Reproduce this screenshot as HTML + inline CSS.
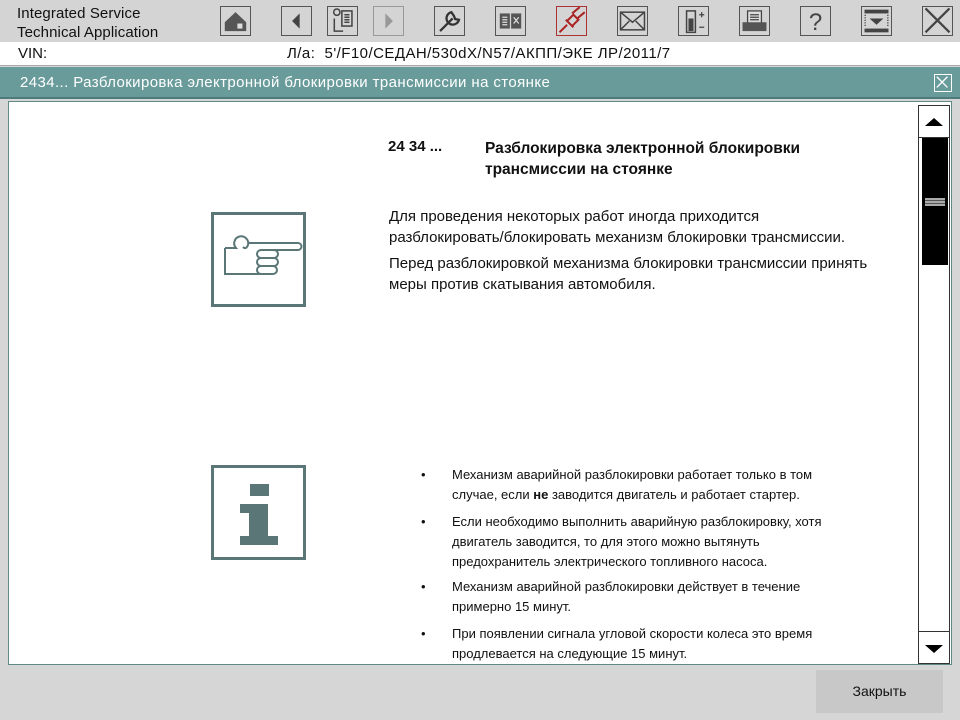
<!DOCTYPE html>
<html><head><meta charset="utf-8"><style>
*{margin:0;padding:0;box-sizing:border-box}
body{width:960px;height:720px;background:#d6d6d6;font-family:"Liberation Sans",sans-serif;position:relative;overflow:hidden;color:#111}
.a{position:absolute}
.btn{position:absolute;top:6px;width:31px;height:30px;border:1px solid #555;background:#d4d4d4}
.btn svg{width:29px;height:28px;display:block}
.t{font-size:13px;line-height:20px}
.u{font-size:15px;line-height:21px}
</style></head><body>
<div class="a" style="left:0;top:0;width:960px;height:42px;background:#d4d4d4"></div>
<div class="a" style="left:17px;top:4px;font-size:15px;line-height:19px;letter-spacing:0.1px">Integrated Service<br>Technical Application</div>

<div class="btn" style="left:220px"><svg viewBox="3 3 23 22"><path d="M6 15 L14.5 7 L23 15 V22 H6Z" fill="#555"/><rect x="16" y="16" width="4" height="4" fill="#ddd"/></svg></div>
<div class="btn" style="left:281px"><svg viewBox="3 3 23 22"><path d="M17 8 L11 14 L17 20Z" fill="#444"/></svg></div>
<div class="btn" style="left:327px"><svg viewBox="3 3 23 22" fill="none" stroke="#444" stroke-width="1.2"><circle cx="10" cy="7" r="2.5"/><rect x="14" y="6" width="8" height="12"/><path d="M16 9h4M16 11h4M16 13h4M16 15h4M8 12v10h7"/></svg></div>
<div class="btn" style="left:373px;border-color:#999"><svg viewBox="3 3 23 22"><path d="M12 8 L18 14 L12 20Z" fill="#999"/></svg></div>
<div class="btn" style="left:434px"><svg viewBox="3 3 23 22" fill="none" stroke="#333" stroke-width="1.8"><path d="M7 22 L17 12 M16 7 a5 5 0 1 0 6 6 l-3 -0.5 -1-2.5z"/></svg></div>
<div class="btn" style="left:495px"><svg viewBox="3 3 23 22"><rect x="6" y="8" width="8" height="12" fill="#555"/><rect x="15" y="8" width="8" height="12" fill="#555"/><path d="M8 11h4M8 13h4M8 15h4M8 17h4M17 11l4 5M21 11l-4 5" stroke="#ddd"/></svg></div>
<div class="btn" style="left:556px;border-color:#a33"><svg viewBox="3 3 23 22" fill="none" stroke="#a22" stroke-width="1.6"><path d="M5 23 L11 17 M10 13 L16 19 M11 14 L16 9 L20 13 L15 18 M15 8 L21 3 M19 12 L25 7"/></svg></div>
<div class="btn" style="left:617px"><svg viewBox="3 3 23 22" fill="none" stroke="#444" stroke-width="1.2"><rect x="5" y="7" width="19" height="14"/><path d="M5 7l9.5 8 9.5-8M5 21l7-7M24 21l-7-7"/></svg></div>
<div class="btn" style="left:678px"><svg viewBox="3 3 23 22"><rect x="9" y="6" width="7" height="17" fill="none" stroke="#444" stroke-width="1.2"/><rect x="10.5" y="12" width="4" height="10" fill="#444"/><path d="M19 9h4M21 7v4M19 19h4" stroke="#444"/></svg></div>
<div class="btn" style="left:739px"><svg viewBox="3 3 23 22"><rect x="9" y="6" width="11" height="10" fill="#ddd" stroke="#444"/><path d="M11 9h7M11 11h7M11 13h7" stroke="#444"/><rect x="5" y="15" width="19" height="7" fill="#555"/></svg></div>
<div class="btn" style="left:800px"><svg viewBox="0 0 29 28"><text x="14.5" y="23" text-anchor="middle" font-size="24" font-family="Liberation Sans" fill="#444">?</text></svg></div>
<div class="btn" style="left:861px"><svg viewBox="3 3 23 22"><rect x="5" y="5" width="19" height="3" fill="#444"/><rect x="5" y="20" width="19" height="3" fill="#444"/><path d="M9 12h11l-5.5 5z" fill="#444"/><path d="M5.5 9v10M23.5 9v10" stroke="#444" stroke-dasharray="1 1"/></svg></div>
<div class="btn" style="left:922px"><svg viewBox="3 3 23 22" stroke="#444" stroke-width="1.8"><path d="M5 4 L24 23 M24 4 L5 23"/></svg></div>

<div class="a" style="left:0;top:42px;width:960px;height:24px;background:#fff;border-bottom:1px solid #aaa"></div>
<div class="a" style="left:18px;top:44px;font-size:15px;line-height:20px">VIN:</div>
<div class="a" style="left:287px;top:44px;font-size:15px;line-height:20px;letter-spacing:0.45px">Л/а:&nbsp; 5'/F10/СЕДАН/530dX/N57/АКПП/ЭКЕ ЛР/2011/7</div>

<div class="a" style="left:0;top:67px;width:960px;height:32px;background:#6a9b9b;border-bottom:2px solid #4d7a7a"></div>
<div class="a" style="left:20px;top:74px;color:#fff;font-size:15px;letter-spacing:0.4px">2434... Разблокировка электронной блокировки трансмиссии на стоянке</div>
<div class="a" style="left:934px;top:74px;width:18px;height:18px;border:1px solid #fff"><svg viewBox="0 0 18 18" width="16" height="16" stroke="#fff" stroke-width="1.5"><path d="M2 2L14 14M14 2L2 14"/></svg></div>

<div class="a" style="left:8px;top:101px;width:944px;height:564px;background:#fff;border:1px solid #5e8a8a"></div>

<div class="a" style="left:388px;top:138px;font-size:15px;font-weight:bold">24 34 ...</div>
<div class="a" style="left:485px;top:138px;font-size:15.5px;font-weight:bold;line-height:21px">Разблокировка электронной блокировки<br>трансмиссии на стоянке</div>

<div class="a" style="left:211px;top:212px;width:95px;height:95px;border:3px solid #5b7676"><svg viewBox="0 0 89 89" width="89" height="89" style="position:absolute;left:0;top:0" fill="none" stroke="#5b7676" stroke-width="2"><path d="M11 33 h11 a7 7 0 1 1 12 -3 q-2 5 -5 2 M34 28 h50 a3.5 3.5 0 0 1 0 7 h-38 M48 35 h12 a4 4 0 0 1 0 8 h-13 a4 4 0 0 1 0 -8 M60 43 a4 4 0 0 1 0 8 h-13 a4 4 0 0 1 0-8 M59 51 a4 4 0 0 1 0 8 h-12 a4 4 0 0 1 0-8 M47 59 H11 V33"/></svg></div>

<div class="a u" style="left:389px;top:206px;width:520px">Для проведения некоторых работ иногда приходится<br>разблокировать/блокировать механизм блокировки трансмиссии.</div>
<div class="a u" style="left:389px;top:253px;width:520px">Перед разблокировкой механизма блокировки трансмиссии принять<br>меры против скатывания автомобиля.</div>

<div class="a" style="left:211px;top:465px;width:95px;height:95px;border:3px solid #5b7676"><svg viewBox="0 0 89 89" width="89" height="89" style="position:absolute;left:0;top:0" fill="#5b7676"><rect x="36" y="16" width="19" height="12"/><path d="M26 36 H54 V68 H64 V77 H26 V68 H35 V45 H26Z"/></svg></div>

<div class="a t" style="left:421px;top:465px">•</div>
<div class="a t" style="left:452px;top:465px">Механизм аварийной разблокировки работает только в том<br>случае, если <b>не</b> заводится двигатель и работает стартер.</div>
<div class="a t" style="left:421px;top:512px">•</div>
<div class="a t" style="left:452px;top:512px">Если необходимо выполнить аварийную разблокировку, хотя<br>двигатель заводится, то для этого можно вытянуть<br>предохранитель электрического топливного насоса.</div>
<div class="a t" style="left:421px;top:577px">•</div>
<div class="a t" style="left:452px;top:577px">Механизм аварийной разблокировки действует в течение<br>примерно 15 минут.</div>
<div class="a t" style="left:421px;top:624px">•</div>
<div class="a t" style="left:452px;top:624px">При появлении сигнала угловой скорости колеса это время<br>продлевается на следующие 15 минут.</div>

<div class="a" style="left:918px;top:105px;width:32px;height:559px;background:#fff;border-left:1px solid #333;border-right:1px solid #333"></div>
<div class="a" style="left:918px;top:105px;width:32px;height:33px;border:1px solid #333;background:#fff"><svg width="30" height="31"><path d="M6 20L15 12L24 20Z" fill="#000"/></svg></div>
<div class="a" style="left:922px;top:138px;width:26px;height:127px;background:#000"></div>
<div class="a" style="left:925px;top:198px;width:20px;height:8px;background:repeating-linear-gradient(#aaa 0 2px,#555 2px 3px)"></div>
<div class="a" style="left:918px;top:631px;width:32px;height:33px;border:1px solid #333;background:#fff"><svg width="30" height="31"><path d="M6 13L15 21L24 13Z" fill="#000"/></svg></div>

<div class="a" style="left:816px;top:670px;width:127px;height:43px;background:#c8c8c8;text-align:center;line-height:43px;font-size:14px">Закрыть</div>
</body></html>
